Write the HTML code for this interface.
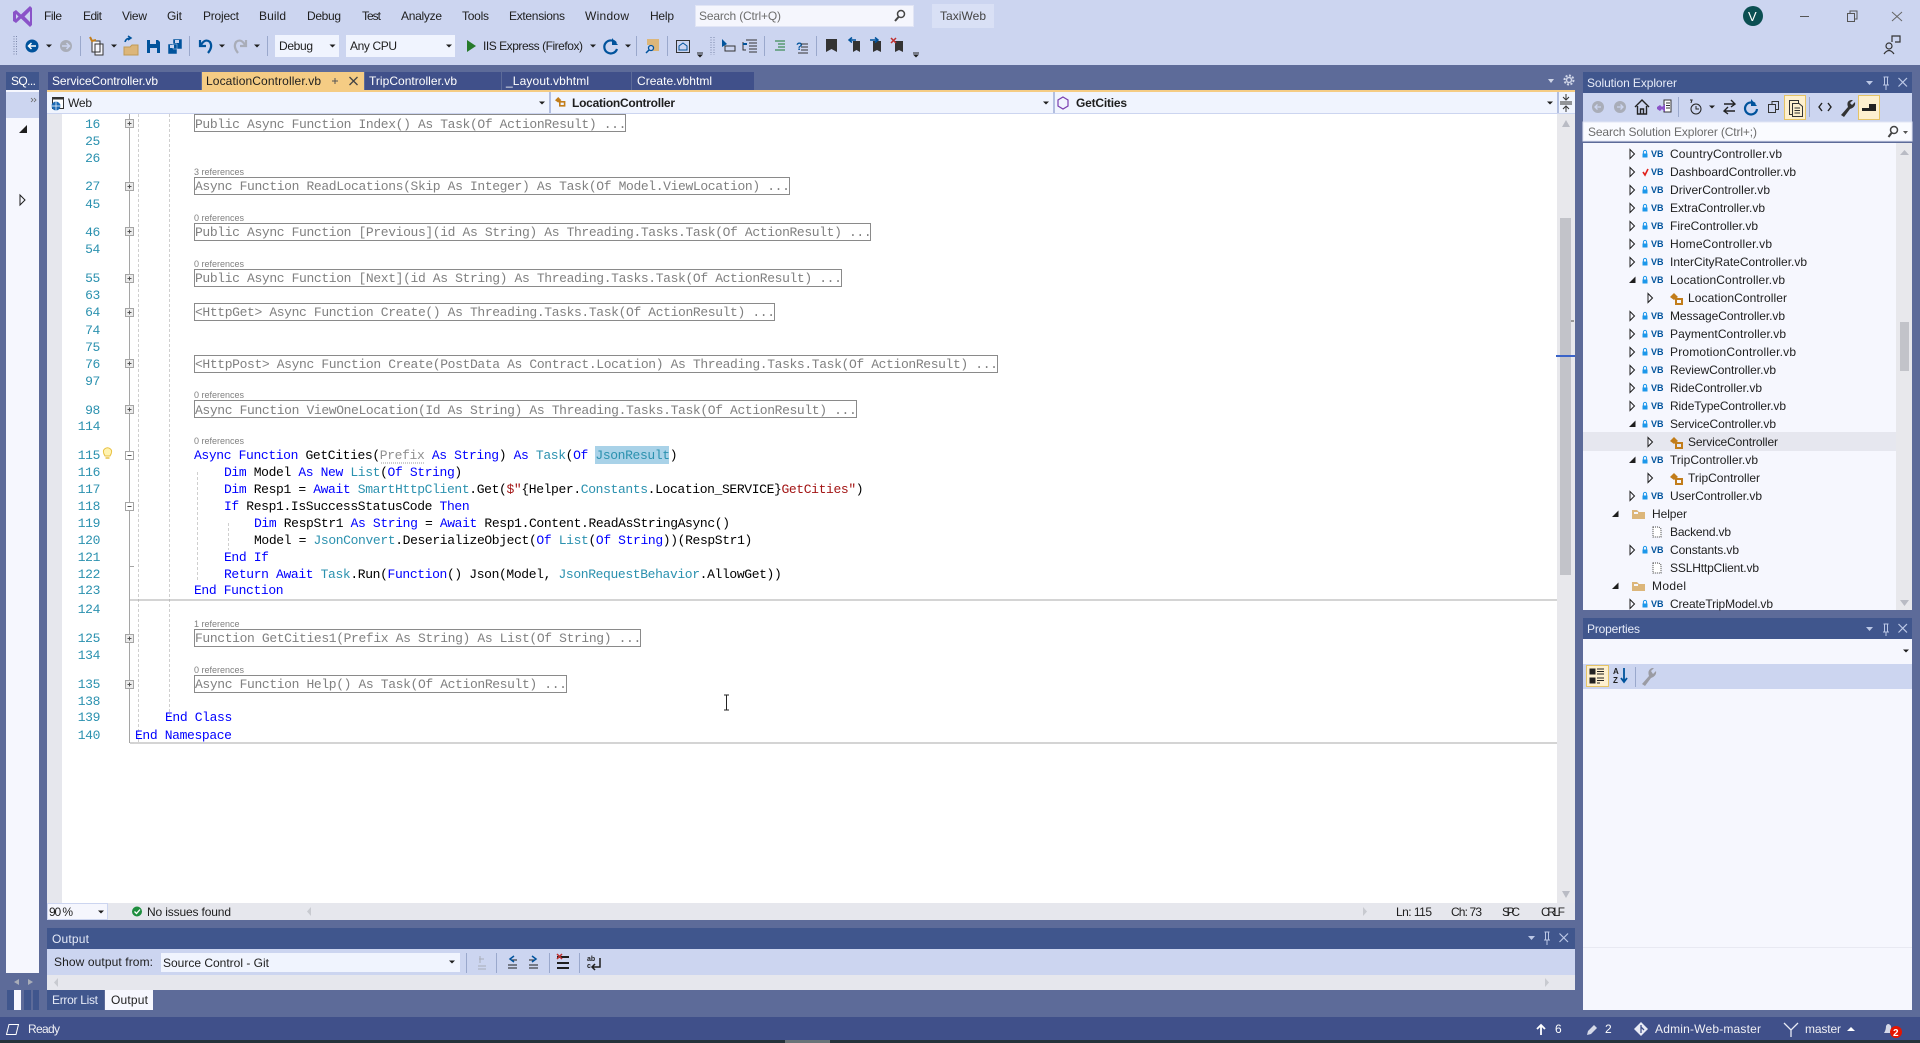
<!DOCTYPE html>
<html><head><meta charset="utf-8"><title>TaxiWeb</title>
<style>
html,body{margin:0;padding:0;width:1920px;height:1043px;overflow:hidden;background:#5d6b99}
svg{display:block}
text{font-family:"Liberation Sans",sans-serif;font-size:12px;fill:#1e1e1e}
.w{fill:#fff}.b{font-weight:bold}
.c{font-family:"Liberation Mono",monospace;font-size:13px;letter-spacing:-.37px;fill:#000}
.n{font-family:"Liberation Mono",monospace;font-size:13px;letter-spacing:-.37px;fill:#2b91af;text-anchor:end}
.f{font-family:"Liberation Mono",monospace;font-size:13px;letter-spacing:-.37px;fill:#808080}
.k{fill:#0000ff}.t{fill:#2b91af}.s{fill:#a31515}.g{fill:#8f8f8f}
.r{font-size:9px;fill:#808080}
.vb{font-size:9px;font-weight:bold;fill:#00539c}
.bx{fill:none;stroke:#8a8a8a;stroke-width:1}
.d{stroke:#cfcfcf;stroke-dasharray:3 2;fill:none}
</style></head><body>
<svg xmlns="http://www.w3.org/2000/svg" width="1920" height="1043" viewBox="0 0 1920 1043">
<defs>
<path id="ex" d="M-2 -4.5L2.5 0L-2 4.5Z" fill="#f6f7fe" stroke="#1e1e1e"/>
<path id="op" d="M3.5 -3.5V3H-3Z" fill="#1e1e1e"/>
<path id="dd" d="M-3 -1.5H3L0 1.5Z" fill="#1e1e1e"/>
<g id="lk"><rect x="-2.5" y="-.5" width="5" height="4" fill="#1c97ea"/><path d="M-1.6 -.5V-2a1.6 1.6 0 0 1 3.2 0V-.5" fill="none" stroke="#1c97ea"/></g>
<g id="cl" fill="#c27d1a"><path d="M-5 -1L-1 -5L3 -1L-1 2Z"/><path d="M1 1H7V6H1Z" fill="none" stroke="#c27d1a" stroke-width="2"/></g>
<g id="pl"><rect x="-4" y="-4" width="8" height="8" fill="#ececec" stroke="#a5a5a5"/><path d="M-2 0H2M0 -2V2" stroke="#555"/></g>
<g id="mn"><rect x="-4" y="-4" width="8" height="8" fill="#fff" stroke="#a5a5a5"/><path d="M-2 0H2" stroke="#555"/></g>
<g id="dt"><path d="M-4 -5H2L4 -3V5H-4Z" fill="#fff" stroke="#424242" stroke-dasharray="1 1"/></g>
<g id="fd"><path d="M-7 -4H-2L0 -2H6V5H-7Z" fill="#dcb67a"/><path d="M-5 -2H-1V0H-5Z" fill="#f5f6fd"/></g>
</defs>

<!-- chrome -->
<rect width="1920" height="65" fill="#ccd5f0"/>
<rect y="65" width="1920" height="952" fill="#5d6b99"/>

<!-- VS logo -->
<path d="M13 12L16 10L21 14.5L30 6L32 8V25L30 27L21 18.5L16 23L13 21Z M16 14V19L18.5 16.5Z M30 11L24.5 16.5L30 22Z" fill="#8a53c8" fill-rule="evenodd"/>

<!-- menu -->
<text x="44" y="20" textLength="18">File</text><text x="83" y="20" textLength="19">Edit</text><text x="122" y="20" textLength="25">View</text><text x="167" y="20" textLength="15">Git</text><text x="203" y="20" textLength="36">Project</text><text x="259" y="20" textLength="27">Build</text><text x="307" y="20" textLength="34">Debug</text><text x="362" y="20" textLength="19">Test</text><text x="401" y="20" textLength="41">Analyze</text><text x="462" y="20" textLength="27">Tools</text><text x="509" y="20" textLength="56">Extensions</text><text x="585" y="20" textLength="44">Window</text><text x="650" y="20" textLength="24">Help</text>
<rect x="695.500" y="5.500" width="218" height="21" fill="#f5f6fd" stroke="#e1e5f5"/>
<text x="699" y="20" textLength="82" style="fill:#6d6d6d">Search (Ctrl+Q)</text>
<circle cx="901" cy="14" r="3.500" fill="none" stroke="#444" stroke-width="1.500"/><path d="M898.500 17L895 21" stroke="#444" stroke-width="2"/>
<rect x="932" y="4" width="62" height="24" fill="#d9e0f5"/><text x="940" y="20" textLength="46" style="fill:#444">TaxiWeb</text>
<circle cx="1753" cy="16" r="10" fill="#0b4f52"/><text x="1748" y="21" class="w" style="font-size:13px">V</text>
<path d="M1800 16.500H1809" stroke="#555"/>
<path d="M1847.500 13.500H1854.500V21.500H1847.500ZM1850 13V11H1857V19H1855" fill="none" stroke="#555"/>
<path d="M1892 12L1902 21M1902 12L1892 21" stroke="#666"/>
<circle cx="1889" cy="46" r="3" fill="none" stroke="#333" stroke-width="1.200"/><path d="M1884 54Q1889 47 1894 54M1892 42V36H1900V42H1895" fill="none" stroke="#333" stroke-width="1.200"/>

<!-- toolbar -->
<path d="M14 36V55M16.500 36V55" stroke="#7a86aa" stroke-dasharray="1 1.500"/>
<circle cx="32" cy="46" r="6.500" fill="#00539c"/><path d="M36 46H29M31.500 43L28.500 46L31.500 49" stroke="#fff" stroke-width="1.500" fill="none"/>
<use href="#dd" x="49" y="46"/>
<circle cx="66" cy="46" r="6" fill="#a9adb8"/><path d="M62 46H69M66.500 43L69.500 46L66.500 49" stroke="#ccd5f0" stroke-width="1.500" fill="none"/>
<path d="M80.500 36V56M189.500 36V56M267.500 36V56M636.500 36V56M667.500 36V56M764.500 36V56M816.500 36V56" stroke="#9aa8cc"/>
<path d="M92 41H100V52H92Z M95 44H103V55H95Z" fill="#f5f6fd" stroke="#333"/><path d="M90 37L92 41L96 40" stroke="#c27d1a" stroke-width="2" fill="none"/>
<use href="#dd" x="114" y="46"/>
<path d="M124 47H130L132 45H138V55H124Z" fill="#dcb67a" stroke="#c09a55"/><path d="M125 42Q126 38 131 38M128 36L131 38L128 40" stroke="#00539c" stroke-width="1.500" fill="none"/>
<path d="M147 40H158L160 42V53H147Z" fill="#00539c"/><rect x="150" y="40" width="6" height="4" fill="#ccd5f0"/><rect x="150" y="48" width="7" height="5" fill="#ccd5f0"/>
<path d="M168 44H177V54H168Z M173 39H182V49H173Z" fill="#00539c" stroke="#ccd5f0" stroke-width=".5"/><rect x="175" y="40" width="4" height="3" fill="#ccd5f0"/><rect x="170" y="45" width="4" height="3" fill="#ccd5f0"/>
<path d="M200 40V46H206M201 45Q205 38 210 42Q213 47 208 53" fill="none" stroke="#00539c" stroke-width="2.200"/>
<use href="#dd" x="222" y="46"/>
<path d="M246 40V46H240M245 45Q241 38 236 42Q233 47 238 53" fill="none" stroke="#a9adb8" stroke-width="2.200"/>
<use href="#dd" x="257" y="46"/>
<rect x="275" y="35" width="64" height="22" fill="#f0f4fe"/><text x="279" y="50" textLength="34">Debug</text><use href="#dd" x="332.500" y="46"/>
<rect x="346" y="35" width="109" height="22" fill="#f0f4fe"/><text x="350" y="50" textLength="47">Any CPU</text><use href="#dd" x="449" y="46"/>
<path d="M467 40L476 46L467 52Z" fill="#267a2a"/>
<text x="483" y="50" textLength="100">IIS Express (Firefox)</text><use href="#dd" x="593" y="46"/>
<path d="M616 43A6.500 6.500 0 1 0 617 49" fill="none" stroke="#00539c" stroke-width="2.200"/><path d="M612 38V45H618Z" fill="#00539c"/>
<use href="#dd" x="628" y="46"/>
<path d="M647 39H659V51H653V45H647Z" fill="#dcb67a"/><circle cx="651" cy="48" r="2.500" fill="none" stroke="#00539c" stroke-width="1.300"/><path d="M649 50L646 53" stroke="#00539c" stroke-width="1.500"/>
<rect x="676.500" y="40.500" width="13" height="12" fill="none" stroke="#333"/><path d="M679 46L683 43L687 46V50H679Z" fill="none" stroke="#00539c"/>
<path d="M697 53H703" stroke="#222"/><use href="#dd" x="700" y="56"/>
<path d="M711 37V55M714 37V55" stroke="#7a86aa" stroke-dasharray="1 1.500"/>
<path d="M722 39L722 47L727 44Z" fill="#00539c"/><path d="M725 46H735V51H725Z" fill="none" stroke="#333"/>
<path d="M743 42V50H746M746 40H757M749 43H757M749 46H757M749 49H757M749 52H757" fill="none" stroke="#333"/><path d="M743 44H747" stroke="#00539c" stroke-width="2"/>
<path d="M775 41H785M778 44H785M778 47H785M775 50H785" stroke="#1d7a32"/>
<text x="796" y="50" class="b" style="fill:#00539c;font-size:11px">?</text><path d="M801 44H808M801 47H808M801 50H808M798 53H808" stroke="#333"/>
<path d="M826 39H837V52L831.500 49L826 52Z" fill="#333"/>
<path d="M853 41H860V52L856.500 50L853 52Z" fill="#333"/><path d="M856 40H850M852 37.500L849 40L852 42.500" stroke="#00539c" stroke-width="1.500" fill="none"/>
<path d="M873 41H881V52L877 50L873 52Z" fill="#333"/><path d="M870 40H877M875 37.500L878 40L875 42.500" stroke="#00539c" stroke-width="1.500" fill="none"/>
<path d="M895 41H903V52L899 50L895 52Z" fill="#333"/><path d="M891 38L896 43M896 38L891 43" stroke="#c03030" stroke-width="1.500"/>
<path d="M913 53H919" stroke="#222"/><use href="#dd" x="916" y="56"/>

<!-- left rail -->
<rect x="6" y="72" width="33" height="18" fill="#40568d"/><text x="11" y="85" class="w" textLength="25">SQ...</text>
<rect x="6" y="90" width="33" height="883" fill="#f6f7fe"/>
<rect x="6" y="92" width="33" height="26" fill="#ccd5f0"/>
<path d="M31 98L33 100L31 102M34 98L36 100L34 102" stroke="#666" fill="none" stroke-width=".8"/>
<path d="M27 125V133H19Z" fill="#1e1e1e"/>
<path d="M20 195L25 200L20 205Z" fill="#f6f7fe" stroke="#1e1e1e"/>
<rect x="6" y="973" width="33" height="17" fill="#5d6b99"/>
<path d="M19 979L14 982L19 985Z M28 979L33 982L28 985Z" fill="#a9adb8"/>
<rect x="7" y="990" width="7" height="20" fill="#40568d"/><rect x="14" y="990" width="7" height="20" fill="#f6f7fe"/><rect x="24" y="990" width="7" height="20" fill="#40568d"/><rect x="33" y="990" width="6" height="20" fill="#40568d"/>

<!-- tabs -->
<rect x="48" y="72" width="153" height="18" fill="#40508a"/><text x="52" y="85" class="w" textLength="106">ServiceController.vb</text>
<rect x="202" y="72" width="162" height="20" fill="#f5cc84"/><text x="206" y="85" textLength="115">LocationController.vb</text>
<path d="M332 81H338M335 78V84" stroke="#555"/><path d="M349.500 77L357.500 85M357.500 77L349.500 85" stroke="#444" stroke-width="1.300"/>
<rect x="365" y="72" width="136" height="18" fill="#40508a"/><text x="369" y="85" class="w" textLength="88">TripController.vb</text>
<rect x="502" y="72" width="129" height="18" fill="#40508a"/><text x="506" y="85" class="w" textLength="83">_Layout.vbhtml</text>
<rect x="632" y="72" width="122" height="18" fill="#40508a"/><text x="637" y="85" class="w" textLength="75">Create.vbhtml</text>
<path d="M1548 79H1554L1551 83Z" fill="#d0d6e8"/>
<circle cx="1569" cy="80" r="4.500" fill="none" stroke="#d0d6e8" stroke-width="2" stroke-dasharray="2 1.500"/><circle cx="1569" cy="80" r="2.500" fill="none" stroke="#d0d6e8" stroke-width="1.500"/>
<rect x="47" y="90" width="1528" height="2" fill="#f5cc84"/>

<!-- nav bar -->
<rect x="47" y="92" width="1528" height="21" fill="#f0f4fe"/>
<rect x="47" y="113" width="1528" height="1" fill="#ccd5f0"/>
<rect x="549" y="92" width="2" height="21" fill="#b3bfe0"/><rect x="1053" y="92" width="2" height="21" fill="#b3bfe0"/><rect x="1557" y="92" width="2" height="21" fill="#b3bfe0"/>
<rect x="52.500" y="97.500" width="11" height="11" fill="#fff" stroke="#333"/><rect x="52" y="97" width="12" height="2.500" fill="#333"/><circle cx="56" cy="106" r="4.500" fill="#1c6ab5"/><path d="M51.500 106H60.500M56 101.500V110.500" stroke="#fff" stroke-width=".7"/>
<text x="68" y="107" textLength="24">Web</text><use href="#dd" x="542" y="103"/>
<use href="#cl" transform="translate(559,101) scale(.8)"/>
<text x="572" y="107" class="b" textLength="103">LocationController</text><use href="#dd" x="1046" y="103"/>
<path d="M1063 97L1068 100V106L1063 109L1058 106V100Z" fill="none" stroke="#7a3fb0" stroke-width="1.200"/>
<text x="1076" y="107" class="b" textLength="51">GetCities</text><use href="#dd" x="1550" y="103"/>
<path d="M1566 94V100M1566 106V112M1560 102H1572M1560 104H1572M1563 97L1566 100L1569 97M1563 109L1566 106L1569 109" stroke="#333" fill="none"/>

<!-- editor -->
<rect x="47" y="114" width="1510" height="789" fill="#fff"/>
<rect x="47" y="114" width="15" height="789" fill="#e6e7ed"/>
<path d="M129.500 114V743" stroke="#a5a5a5"/>
<path d="M138.500 114V743M169.500 114V718M197.500 472V582M228.500 523V550" class="d"/>
<path d="M130 600H1557M130 743H1557" stroke="#a8a8a8"/>
<path d="M130 566.500H134M130 743H134" stroke="#a5a5a5"/>

<rect x="595" y="446" width="74" height="18" fill="#a9d2e8"/>

<!-- line numbers -->
<text class="n" x="100" y="128">16</text><text class="n" x="100" y="145">25</text><text class="n" x="100" y="162">26</text><text class="n" x="100" y="190">27</text><text class="n" x="100" y="208">45</text><text class="n" x="100" y="236">46</text><text class="n" x="100" y="253">54</text><text class="n" x="100" y="282">55</text><text class="n" x="100" y="299">63</text><text class="n" x="100" y="316">64</text><text class="n" x="100" y="334">74</text><text class="n" x="100" y="351">75</text><text class="n" x="100" y="368">76</text><text class="n" x="100" y="385">97</text><text class="n" x="100" y="414">98</text><text class="n" x="100" y="430">114</text><text class="n" x="100" y="459">115</text><text class="n" x="100" y="476">116</text><text class="n" x="100" y="493">117</text><text class="n" x="100" y="510">118</text><text class="n" x="100" y="527">119</text><text class="n" x="100" y="544">120</text><text class="n" x="100" y="561">121</text><text class="n" x="100" y="578">122</text><text class="n" x="100" y="594">123</text><text class="n" x="100" y="613">124</text><text class="n" x="100" y="642">125</text><text class="n" x="100" y="659">134</text><text class="n" x="100" y="688">135</text><text class="n" x="100" y="705">138</text><text class="n" x="100" y="721">139</text><text class="n" x="100" y="739">140</text>

<!-- outline marks -->
<use href="#pl" x="129.500" y="123.500"/><use href="#pl" x="129.500" y="186.500"/><use href="#pl" x="129.500" y="231.500"/><use href="#pl" x="129.500" y="278.500"/><use href="#pl" x="129.500" y="312.500"/><use href="#pl" x="129.500" y="363.500"/><use href="#pl" x="129.500" y="409.500"/><use href="#mn" x="129.500" y="455.500"/><use href="#mn" x="129.500" y="506.500"/><use href="#pl" x="129.500" y="638.500"/><use href="#pl" x="129.500" y="684.500"/>

<!-- bulb -->
<path d="M105 456Q102 451 104.500 449Q107.500 446.500 110.500 449Q113 451 110 456Z" fill="#fff3b0" stroke="#e8c040"/><path d="M105.500 458H109.500" stroke="#e8c040" stroke-width="1.500"/>

<!-- collapsed regions -->
<rect class="bx" x="194.500" y="114.500" width="431" height="17"/><text class="f" x="195" y="128">Public Async Function Index() As Task(Of ActionResult) ...</text>
<text class="r" x="194" y="175">3 references</text>
<rect class="bx" x="194.500" y="177.500" width="595" height="17"/><text class="f" x="195" y="190">Async Function ReadLocations(Skip As Integer) As Task(Of Model.ViewLocation) ...</text>
<text class="r" x="194" y="221">0 references</text>
<rect class="bx" x="194.500" y="223.500" width="676" height="17"/><text class="f" x="195" y="236">Public Async Function [Previous](id As String) As Threading.Tasks.Task(Of ActionResult) ...</text>
<text class="r" x="194" y="267">0 references</text>
<rect class="bx" x="194.500" y="269.500" width="647" height="17"/><text class="f" x="195" y="282">Public Async Function [Next](id As String) As Threading.Tasks.Task(Of ActionResult) ...</text>
<rect class="bx" x="194.500" y="303.500" width="580" height="17"/><text class="f" x="195" y="316">&lt;HttpGet&gt; Async Function Create() As Threading.Tasks.Task(Of ActionResult) ...</text>
<rect class="bx" x="194.500" y="355.500" width="803" height="17"/><text class="f" x="195" y="368">&lt;HttpPost&gt; Async Function Create(PostData As Contract.Location) As Threading.Tasks.Task(Of ActionResult) ...</text>
<text class="r" x="194" y="398">0 references</text>
<rect class="bx" x="194.500" y="400.500" width="662" height="17"/><text class="f" x="195" y="414">Async Function ViewOneLocation(Id As String) As Threading.Tasks.Task(Of ActionResult) ...</text>
<text class="r" x="194" y="444">0 references</text>
<text class="r" x="194" y="627">1 reference</text>
<rect class="bx" x="194.500" y="629.500" width="446" height="17"/><text class="f" x="195" y="642">Function GetCities1(Prefix As String) As List(Of String) ...</text>
<text class="r" x="194" y="673">0 references</text>
<rect class="bx" x="194.500" y="675.500" width="372" height="17"/><text class="f" x="195" y="688">Async Function Help() As Task(Of ActionResult) ...</text>

<!-- code -->
<text class="c" x="194" y="459"><tspan class="k">Async Function</tspan> GetCities(<tspan class="g">Prefix</tspan> <tspan class="k">As String</tspan>) <tspan class="k">As</tspan> <tspan class="t">Task</tspan>(<tspan class="k">Of</tspan> <tspan class="t">JsonResult</tspan>)</text>
<path d="M381 463H425" stroke="#999" stroke-dasharray="1 1"/>
<text class="c" x="224" y="476"><tspan class="k">Dim</tspan> Model <tspan class="k">As New</tspan> <tspan class="t">List</tspan>(<tspan class="k">Of String</tspan>)</text>
<text class="c" x="224" y="493"><tspan class="k">Dim</tspan> Resp1 = <tspan class="k">Await</tspan> <tspan class="t">SmartHttpClient</tspan>.Get(<tspan class="s">$"</tspan>{Helper.<tspan class="t">Constants</tspan>.Location_SERVICE}<tspan class="s">GetCities"</tspan>)</text>
<text class="c" x="224" y="510"><tspan class="k">If</tspan> Resp1.IsSuccessStatusCode <tspan class="k">Then</tspan></text>
<text class="c" x="254" y="527"><tspan class="k">Dim</tspan> RespStr1 <tspan class="k">As String</tspan> = <tspan class="k">Await</tspan> Resp1.Content.ReadAsStringAsync()</text>
<text class="c" x="254" y="544">Model = <tspan class="t">JsonConvert</tspan>.DeserializeObject(<tspan class="k">Of</tspan> <tspan class="t">List</tspan>(<tspan class="k">Of String</tspan>))(RespStr1)</text>
<text class="c" x="224" y="561"><tspan class="k">End If</tspan></text>
<text class="c" x="224" y="578"><tspan class="k">Return Await</tspan> <tspan class="t">Task</tspan>.Run(<tspan class="k">Function</tspan>() Json(Model, <tspan class="t">JsonRequestBehavior</tspan>.AllowGet))</text>
<text class="c" x="194" y="594"><tspan class="k">End Function</tspan></text>
<text class="c" x="165" y="721"><tspan class="k">End Class</tspan></text>
<text class="c" x="135" y="739"><tspan class="k">End Namespace</tspan></text>

<!-- I beam -->
<path d="M724 695H729M724 710H729M726.500 695V710" stroke="#222" fill="none"/>

<!-- editor scrollbar -->
<rect x="1557" y="114" width="18" height="789" fill="#e8e8ec"/>
<rect x="1560" y="218" width="11" height="357" fill="#c2c3c9"/>
<path d="M1566 120L1570 127H1562Z M1566 898L1570 891H1562Z" fill="#b9bbc4"/>
<rect x="1556" y="355" width="19" height="2" fill="#3a63c8"/>
<rect x="1571" y="320" width="3" height="2" fill="#999"/>

<!-- editor status -->
<rect x="47" y="903" width="1528" height="17" fill="#e6e7ed"/>
<rect x="47.500" y="903.500" width="60" height="16" fill="#f5f6fd" stroke="#ccd5f0"/>
<text x="49" y="916" textLength="24">90 %</text><use href="#dd" x="101" y="912"/>
<circle cx="137" cy="911.500" r="5" fill="#1e8e3e"/><path d="M134.500 911.500L136.500 913.500L140 909.500" stroke="#fff" stroke-width="1.300" fill="none"/>
<text x="147" y="916" textLength="84">No issues found</text>
<path d="M311 907V916L307 911.500Z" fill="#c8cad0"/><path d="M1363 907V916L1367 911.500Z" fill="#c8cad0"/>
<text x="1396" y="916" textLength="36">Ln: 115</text><text x="1451" y="916" textLength="31">Ch: 73</text><text x="1502" y="916" textLength="18">SPC</text><text x="1541" y="916" textLength="24">CRLF</text>

<!-- output -->
<rect x="47" y="928" width="1528" height="21" fill="#40568d"/>
<text x="52" y="943" textLength="37" style="fill:#e6ebf8">Output</text>
<path d="M1528 936H1535L1531.500 940Z" fill="#bcc8e6"/>
<path d="M1544.500 932H1549.500M1545.500 932V940M1548.500 932V940M1544 940H1550M1547 940V945" stroke="#bcc8e6" fill="none"/>
<path d="M1559.500 933.500L1568 942M1568 933.500L1559.500 942" stroke="#bcc8e6" stroke-width="1.200"/>
<rect x="47" y="949" width="1528" height="26" fill="#ccd5f0"/>
<text x="54" y="966" textLength="99">Show output from:</text>
<rect x="161" y="953" width="299" height="19" fill="#f0f4fe"/><text x="163" y="967" textLength="106">Source Control - Git</text><use href="#dd" x="452" y="962"/>
<path d="M466.500 953V973M496.500 953V973M549.500 953V973M579.500 953V973" stroke="#9aa8cc"/>
<path d="M478 966H486M478 969H486M480 956V963M479 959H484" stroke="#a9adb8" fill="none"/>
<path d="M508 965H517M508 968H517M511 960H517" stroke="#1e1e1e" fill="none"/><path d="M514 956L510 959L514 962" stroke="#00539c" stroke-width="1.500" fill="none"/>
<path d="M529 965H538M529 968H538M529 960H535" stroke="#1e1e1e" fill="none"/><path d="M532 956L536 959L532 962" stroke="#00539c" stroke-width="1.500" fill="none"/>
<path d="M557 957H569M557 963H569M557 968H569" stroke="#1e1e1e" stroke-width="2"/><path d="M557 954L562 959M562 954L557 959" stroke="#c03030" stroke-width="1.500"/>
<text x="587" y="961" style="font-size:7px;font-weight:bold">ab</text><text x="587" y="968" style="font-size:7px;font-weight:bold">c</text><path d="M600 958V967H592M595 964L592 967L595 970" stroke="#1e1e1e" stroke-width="1.500" fill="none"/>
<rect x="47" y="975" width="1528" height="15" fill="#e6e7ed"/>
<path d="M58 978V987L54 982.500Z M1545 978V987L1549 982.500Z" fill="#c8cad0"/>
<rect x="47" y="990" width="57" height="20" fill="#40568d"/><text x="52" y="1004" textLength="46" style="fill:#e6ebf8">Error List</text>
<rect x="105" y="990" width="48" height="20" fill="#f6f7fe"/><text x="111" y="1004" textLength="37">Output</text>

<!-- solution explorer -->
<rect x="1583" y="72" width="329" height="21" fill="#40568d"/>
<text x="1587" y="87" textLength="90" style="fill:#e6ebf8">Solution Explorer</text>
<path d="M1866 81H1873L1869.500 85Z" fill="#bcc8e6"/>
<path d="M1883.500 77H1888.500M1884.500 77V85M1887.500 77V85M1883 85H1889M1886 85V90" stroke="#bcc8e6" fill="none"/>
<path d="M1898.500 78L1907 86.500M1907 78L1898.500 86.500" stroke="#bcc8e6" stroke-width="1.200"/>
<rect x="1583" y="93" width="329" height="29" fill="#ccd5f0"/>
<circle cx="1598" cy="107" r="6" fill="#a9adb8"/><path d="M1601 107H1595M1597.500 104.500L1595 107L1597.500 109.500" stroke="#ccd5f0" stroke-width="1.300" fill="none"/>
<circle cx="1620" cy="107" r="6" fill="#a9adb8"/><path d="M1617 107H1623M1620.500 104.500L1623 107L1620.500 109.500" stroke="#ccd5f0" stroke-width="1.300" fill="none"/>
<path d="M1635 107L1642 100L1649 107M1637.500 106V114H1646.500V106M1640.500 114V109H1643.500V114" fill="none" stroke="#222" stroke-width="1.400"/>
<path d="M1664 100H1671V112H1664Z M1666 103H1670M1666 105.500H1670M1666 108H1670" fill="#fff" stroke="#333"/><path d="M1657 107L1660 105L1662 107L1665 104V112L1662 109L1660 111L1657 109Z" fill="#8a53c8"/>
<path d="M1678.500 97V117M1809.500 97V117" stroke="#9aa8cc"/>
<circle cx="1696" cy="109" r="5" fill="none" stroke="#222"/><path d="M1696 106V109H1699M1690 100H1692L1691 103" stroke="#222" fill="none"/>
<use href="#dd" x="1712" y="107"/>
<path d="M1724 104H1735M1731 100L1735 104L1731 107M1735 111H1724M1728 107L1724 111L1728 114" stroke="#222" stroke-width="1.400" fill="none"/>
<path d="M1755 104A6 6 0 1 0 1757 109" fill="none" stroke="#00539c" stroke-width="2.200"/><path d="M1751 99V106H1757Z" fill="#00539c"/>
<path d="M1768.500 104.500H1775.500V112.500H1768.500ZM1772 104V101.500H1778.500V109.500H1776" fill="none" stroke="#333"/>
<rect x="1784.500" y="95.500" width="21" height="24" fill="#fdf0cf" stroke="#e5c365"/>
<path d="M1789.500 100.500H1798.500V114.500H1789.500Z" fill="none" stroke="#333"/><path d="M1792.500 103.500H1799L1802.500 106.500V116.500H1792.500Z" fill="#fdf0cf" stroke="#333"/><path d="M1794.500 108H1800M1794.500 110.500H1800M1794.500 113H1800" stroke="#333"/>
<path d="M1822 103L1819 107L1822 111M1828 103L1831 107L1828 111" stroke="#222" stroke-width="1.400" fill="none"/>
<path d="M1841 115L1848 107Q1846 101 1851 100L1853 100L1850 103L1852 105L1855 102Q1856 107 1850 109L1844 117Z" fill="#333"/>
<rect x="1858.500" y="95.500" width="21" height="24" fill="#fdf0cf" stroke="#e5c365"/>
<path d="M1862 108H1876V111H1862Z M1869 104H1876V108H1869Z" fill="#222"/>
<rect x="1583" y="122" width="329" height="19" fill="#fafbff" stroke="#e1e5f5"/>
<text x="1588" y="136" textLength="169" style="fill:#6d6d6d">Search Solution Explorer (Ctrl+;)</text>
<circle cx="1894" cy="130" r="3.500" fill="none" stroke="#444" stroke-width="1.500"/><path d="M1891.500 133L1888.500 137" stroke="#444" stroke-width="2"/><path d="M1903 131H1908L1905.500 134Z" fill="#555"/>

<rect x="1583" y="143" width="329" height="467" fill="#f6f7fe"/>
<rect x="1583" y="432" width="313" height="19" fill="#e6e7ef"/>
<rect x="1896" y="143" width="16" height="467" fill="#e8e8ec"/>
<rect x="1900" y="322" width="9" height="49" fill="#c2c3c9"/>
<path d="M1904.500 150L1909 155H1900Z M1904.500 606L1909 600H1900Z" fill="#b9bbc4"/>

<use href="#ex" x="1632" y="154"/><use href="#lk" x="1645" y="154"/><text class="vb" x="1651" y="157">VB</text><text x="1670" y="158" textLength="112">CountryController.vb</text>
<use href="#ex" x="1632" y="172"/><path d="M1643 172L1645 175L1648 169" stroke="#e0201a" stroke-width="1.600" fill="none"/><text class="vb" x="1651" y="175">VB</text><text x="1670" y="176" textLength="126">DashboardController.vb</text>
<use href="#ex" x="1632" y="190"/><use href="#lk" x="1645" y="190"/><text class="vb" x="1651" y="193">VB</text><text x="1670" y="194" textLength="100">DriverController.vb</text>
<use href="#ex" x="1632" y="208"/><use href="#lk" x="1645" y="208"/><text class="vb" x="1651" y="211">VB</text><text x="1670" y="212" textLength="95">ExtraController.vb</text>
<use href="#ex" x="1632" y="226"/><use href="#lk" x="1645" y="226"/><text class="vb" x="1651" y="229">VB</text><text x="1670" y="230" textLength="88">FireController.vb</text>
<use href="#ex" x="1632" y="244"/><use href="#lk" x="1645" y="244"/><text class="vb" x="1651" y="247">VB</text><text x="1670" y="248" textLength="102">HomeController.vb</text>
<use href="#ex" x="1632" y="262"/><use href="#lk" x="1645" y="262"/><text class="vb" x="1651" y="265">VB</text><text x="1670" y="266" textLength="137">InterCityRateController.vb</text>
<use href="#op" x="1632" y="280"/><use href="#lk" x="1645" y="280"/><text class="vb" x="1651" y="283">VB</text><text x="1670" y="284" textLength="115">LocationController.vb</text>
<use href="#ex" x="1650" y="298"/><use href="#cl" x="1675" y="298"/><text x="1688" y="302" textLength="99">LocationController</text>
<use href="#ex" x="1632" y="316"/><use href="#lk" x="1645" y="316"/><text class="vb" x="1651" y="319">VB</text><text x="1670" y="320" textLength="115">MessageController.vb</text>
<use href="#ex" x="1632" y="334"/><use href="#lk" x="1645" y="334"/><text class="vb" x="1651" y="337">VB</text><text x="1670" y="338" textLength="116">PaymentController.vb</text>
<use href="#ex" x="1632" y="352"/><use href="#lk" x="1645" y="352"/><text class="vb" x="1651" y="355">VB</text><text x="1670" y="356" textLength="126">PromotionController.vb</text>
<use href="#ex" x="1632" y="370"/><use href="#lk" x="1645" y="370"/><text class="vb" x="1651" y="373">VB</text><text x="1670" y="374" textLength="106">ReviewController.vb</text>
<use href="#ex" x="1632" y="388"/><use href="#lk" x="1645" y="388"/><text class="vb" x="1651" y="391">VB</text><text x="1670" y="392" textLength="92">RideController.vb</text>
<use href="#ex" x="1632" y="406"/><use href="#lk" x="1645" y="406"/><text class="vb" x="1651" y="409">VB</text><text x="1670" y="410" textLength="116">RideTypeController.vb</text>
<use href="#op" x="1632" y="424"/><use href="#lk" x="1645" y="424"/><text class="vb" x="1651" y="427">VB</text><text x="1670" y="428" textLength="106">ServiceController.vb</text>
<use href="#ex" x="1650" y="442"/><use href="#cl" x="1675" y="442"/><text x="1688" y="446" textLength="90">ServiceController</text>
<use href="#op" x="1632" y="460"/><use href="#lk" x="1645" y="460"/><text class="vb" x="1651" y="463">VB</text><text x="1670" y="464" textLength="88">TripController.vb</text>
<use href="#ex" x="1650" y="478"/><use href="#cl" x="1675" y="478"/><text x="1688" y="482" textLength="72">TripController</text>
<use href="#ex" x="1632" y="496"/><use href="#lk" x="1645" y="496"/><text class="vb" x="1651" y="499">VB</text><text x="1670" y="500" textLength="92">UserController.vb</text>
<use href="#op" x="1615" y="514"/><use href="#fd" x="1639" y="514"/><text x="1652" y="518" textLength="35">Helper</text>
<use href="#dt" x="1657" y="532"/><text x="1670" y="536" textLength="61">Backend.vb</text>
<use href="#ex" x="1632" y="550"/><use href="#lk" x="1645" y="550"/><text class="vb" x="1651" y="553">VB</text><text x="1670" y="554" textLength="69">Constants.vb</text>
<use href="#dt" x="1657" y="568"/><text x="1670" y="572" textLength="89">SSLHttpClient.vb</text>
<use href="#op" x="1615" y="586"/><use href="#fd" x="1639" y="586"/><text x="1652" y="590" textLength="34">Model</text>
<use href="#ex" x="1632" y="604"/><use href="#lk" x="1645" y="604"/><text class="vb" x="1651" y="607">VB</text><text x="1670" y="608" textLength="103">CreateTripModel.vb</text>

<!-- properties -->
<rect x="1583" y="618" width="329" height="21" fill="#40568d"/>
<text x="1587" y="633" textLength="53" style="fill:#e6ebf8">Properties</text>
<path d="M1866 627H1873L1869.500 631Z" fill="#bcc8e6"/>
<path d="M1883.500 624H1888.500M1884.500 624V632M1887.500 624V632M1883 632H1889M1886 632V636" stroke="#bcc8e6" fill="none"/>
<path d="M1898.500 624L1907 632.500M1907 624L1898.500 632.500" stroke="#bcc8e6" stroke-width="1.200"/>
<rect x="1583" y="639" width="329" height="371" fill="#f6f7fe"/>
<use href="#dd" x="1906" y="651"/>
<rect x="1583" y="664" width="329" height="25" fill="#ccd5f0"/>
<rect x="1586.500" y="665.500" width="22" height="21" fill="#fdf0cf" stroke="#e5c365"/>
<path d="M1590 669H1595V674H1590ZM1590 678H1595V683H1590Z" fill="#222" stroke="#222"/><path d="M1597 669H1604M1597 671.500H1604M1597 674H1604M1597 678H1604M1597 680.500H1604M1597 683H1600" stroke="#222"/>
<text x="1613" y="674" style="font-size:8px;font-weight:bold">A</text><text x="1613" y="683" style="font-size:8px;font-weight:bold">Z</text>
<path d="M1624 668V682M1621 678L1624 682L1627 678" stroke="#00539c" stroke-width="1.800" fill="none"/>
<path d="M1635.500 667V687" stroke="#9aa8cc"/>
<path d="M1642 684L1649 676Q1647 670 1652 668L1654 668L1651 671L1653 674L1656 671Q1657 676 1651 678L1645 686Z" fill="#9a9ba3"/>
<rect x="1583" y="947" width="329" height="1" fill="#e8e9f2"/>

<!-- status bar -->
<rect y="1017" width="1920" height="23" fill="#40508a"/>
<rect y="1040" width="1920" height="3" fill="#24323a"/>
<rect x="785" y="1040" width="45" height="3" fill="#6a7478"/>
<path d="M6.500 1034.500L9 1024.500H18.500L16 1034.500Z" fill="none" stroke="#fff"/>
<text x="28" y="1033" textLength="32" style="fill:#f0f0f5">Ready</text>
<path d="M1541 1035V1025M1537 1029L1541 1025L1545 1029" stroke="#fff" stroke-width="1.800" fill="none"/>
<text x="1555" y="1033" class="w">6</text>
<path d="M1587 1035L1588 1031L1594 1025L1597 1028L1591 1034Z" fill="#d5d9e8"/>
<text x="1605" y="1033" class="w">2</text>
<path d="M1641 1022L1648 1029L1641 1036L1634 1029Z" fill="#e8ebf5"/><path d="M1641 1025V1033M1641 1027L1644 1030" stroke="#40508a" stroke-width="1.300"/>
<text x="1655" y="1033" textLength="106" style="fill:#f0f0f5">Admin-Web-master</text>
<path d="M1784 1023L1791 1030L1798 1023M1791 1030V1037" stroke="#e8ebf5" stroke-width="1.300" fill="none"/>
<text x="1805" y="1033" textLength="36" style="fill:#f0f0f5">master</text>
<path d="M1847 1031L1851 1027L1855 1031Z" fill="#fff"/>
<path d="M1884 1033Q1886 1030 1886 1026Q1888 1022 1891 1026Q1891 1030 1893 1033Z" fill="#d5d9e8"/>
<circle cx="1896" cy="1032" r="6" fill="#e51400"/><text x="1893" y="1036" class="w b" style="font-size:10px">2</text>
</svg>
</body></html>
